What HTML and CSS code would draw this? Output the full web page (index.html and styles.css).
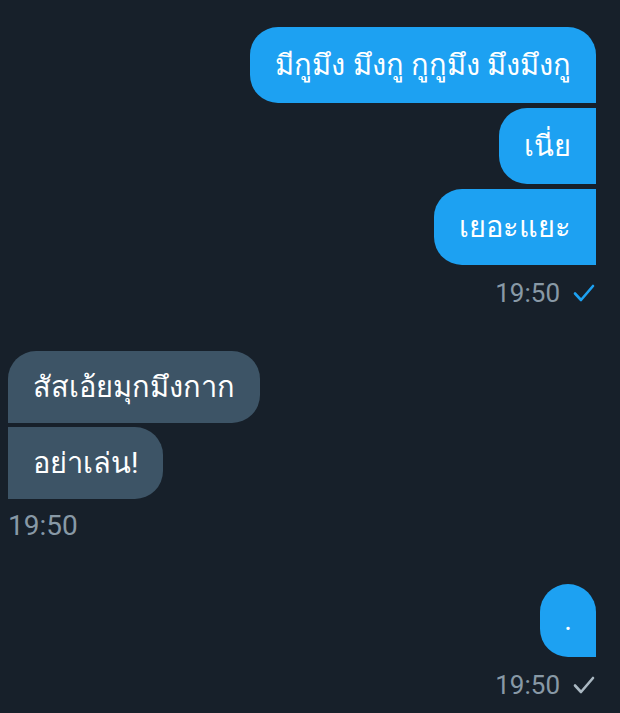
FILE: index.html
```html
<!DOCTYPE html>
<html lang="th">
<head>
    <meta charset="UTF-8">
    <meta name="viewport" content="width=device-width, initial-scale=1.0">
    <title>Messages</title>
    <link rel="stylesheet" href="styles.css">
</head>
<body>
    <div class="chat">
        <div class="group sent">
            <div class="bubble first">มีกูมึง มึงกู กูกูมึง มึงมึงกู</div>
            <div class="bubble">เนี่ย</div>
            <div class="bubble">เยอะแยะ</div>
            <div class="time">19:50
                <svg class="check seen" viewBox="0 0 24 20" width="24" height="20"><path d="M3 10.5 L9 17 L21 3" fill="none" stroke="currentColor" stroke-width="2.6" stroke-linecap="round" stroke-linejoin="round"/></svg>
            </div>
        </div>

        <div class="group received">
            <div class="bubble first">สัสเอ้ยมุกมึงกาก</div>
            <div class="bubble">อย่าเล่น!</div>
            <div class="time">19:50</div>
        </div>

        <div class="group sent">
            <div class="bubble first dot">.</div>
            <div class="time">19:50
                <svg class="check" viewBox="0 0 24 20" width="24" height="20"><path d="M3 10.5 L9 17 L21 3" fill="none" stroke="currentColor" stroke-width="2.6" stroke-linecap="round" stroke-linejoin="round"/></svg>
            </div>
        </div>
    </div>
</body>
</html>
```

FILE: styles.css
```css
body {
    margin: 0;
    background: #17202a;
    font-family: Roboto, "Noto Sans", sans-serif;
    color: white;
}
.chat {
    display: flex;
    flex-direction: column;
    gap: 40px;
    padding: 27px 24px 0 8px;
}
.group {
    display: flex;
    flex-direction: column;
    gap: 5px;
}
.sent {
    align-items: flex-end;
}
.received {
    align-items: flex-start;
    gap: 4px;
}
.bubble {
    font-size: 29px;
    line-height: 36px;
    padding: 20px 25px;
    white-space: nowrap;
}
.sent .bubble {
    background: #1da1f2;
    border-radius: 28px 0 0 28px;
}
.sent .bubble.first {
    border-radius: 28px 28px 0 28px;
}
.received .bubble {
    background: #3d5466;
    padding: 18px 25px;
    border-radius: 0 28px 28px 0;
}
.received .bubble.first {
    border-radius: 28px 28px 28px 0;
}
.bubble.dot {
    width: 56px;
    box-sizing: border-box;
    padding: 18px 0 19px;
    text-align: center;
}
.time {
    display: flex;
    align-items: center;
    gap: 12px;
    color: #8899a6;
    font-size: 26px;
    line-height: 36px;
    margin-top: 5px;
}
.received .time {
    font-size: 28px;
}
.check {
    color: #aab8c2;
}
.check.seen {
    color: #1da1f2;
}
```
